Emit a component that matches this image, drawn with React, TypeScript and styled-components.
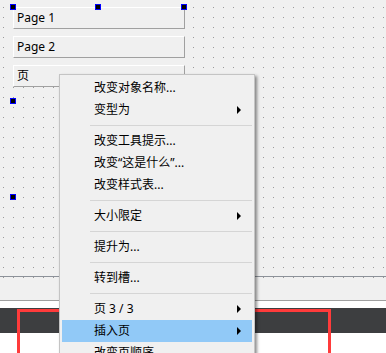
import styled, { createGlobalStyle } from "styled-components";

// ------ menu data ------
type Entry =
  | { kind: "item"; label: string; sub?: boolean; active?: boolean }
  | { kind: "sep" };

const menuEntries: Entry[] = [
  { kind: "item", label: "改变对象名称..." },
  { kind: "item", label: "变型为", sub: true },
  { kind: "sep" },
  { kind: "item", label: "改变工具提示..." },
  { kind: "item", label: "改变“这是什么”..." },
  { kind: "item", label: "改变样式表..." },
  { kind: "sep" },
  { kind: "item", label: "大小限定", sub: true },
  { kind: "sep" },
  { kind: "item", label: "提升为..." },
  { kind: "sep" },
  { kind: "item", label: "转到槽..." },
  { kind: "sep" },
  { kind: "item", label: "页 3 / 3", sub: true },
  { kind: "item", label: "插入页", sub: true, active: true },
  { kind: "item", label: "改变页顺序..." },
];

const pages = ["Page 1", "Page 2", "页"];

// handle positions relative to the tool box
const handles = [
  { x: -3, y: -3 },
  { x: 82, y: -3 },
  { x: 168, y: -3 },
  { x: -3, y: 91 },
  { x: -3, y: 187 },
];

function App() {
  return (
    <>
      <GlobalStyle />
      <Screen>
        {/* ------ designer form ------ */}
        <FormCanvas>
          <ToolBox>
            {pages.map((p) => (
              <ToolButton key={p}>{p}</ToolButton>
            ))}
            {handles.map((h, i) => (
              <Handle key={i} $x={h.x} $y={h.y} />
            ))}
          </ToolBox>
        </FormCanvas>
        <LowerStrip>
          <DotRow />
        </LowerStrip>
        <WhiteGap />
        <DarkBar />
        <WhiteRest />

        {/* ------ overlays ------ */}
        <Marker />
        <ContextMenu>
          {menuEntries.map((e, i) =>
            e.kind === "sep" ? (
              <Separator key={i} />
            ) : (
              <MenuItem key={i} $active={e.active}>
                <span>{e.label}</span>
                {e.sub ? <SubArrow /> : null}
              </MenuItem>
            )
          )}
        </ContextMenu>
      </Screen>
    </>
  );
}

export default App;

// ------ component styles -------
const GlobalStyle = createGlobalStyle`
  html, body {
    margin: 0;
    padding: 0;
  }
  body {
    background: #f0f0f0;
    font-family: "Noto Sans", "Noto Sans CJK SC", sans-serif;
    font-size: 12px;
    color: #000;
  }
`;

const dots = `
  background-color: #f0f0f0;
  background-image: linear-gradient(to right, transparent 1px, #f0f0f0 1px),
    linear-gradient(to bottom, #9a9a9a 1px, transparent 1px);
  background-size: 10px 10px;
`;

const Screen = styled.div`
  position: relative;
  width: 386px;
  height: 353px;
  overflow: hidden;
  display: flex;
  flex-direction: column;
`;

const FormCanvas = styled.div`
  ${dots}
  background-position: 3px 7px;
  height: 277px;
  flex-shrink: 0;
  box-sizing: border-box;
  padding: 7px 0 0 13px;
  border-bottom: 1px solid #8c9199;
`;

const LowerStrip = styled.div`
  height: 24px;
  flex-shrink: 0;
  box-sizing: border-box;
  background: #f0f0f0;
  border-bottom: 1px solid #a0a0a0;
`;

const DotRow = styled.div`
  ${dots}
  background-position: 3px 0;
  height: 1px;
`;

const WhiteGap = styled.div`
  height: 7px;
  flex-shrink: 0;
  background: #fff;
`;

const DarkBar = styled.div`
  height: 25px;
  flex-shrink: 0;
  background: #3d3e40;
`;

const WhiteRest = styled.div`
  flex: 1;
  background: #fff;
`;

const ToolBox = styled.div`
  position: relative;
  width: 172px;
  height: 191px;
  display: flex;
  flex-direction: column;
  gap: 7px;
`;

const ToolButton = styled.div`
  height: 22px;
  box-sizing: border-box;
  background: #f0f0f0;
  border-top: 1px solid #fff;
  border-left: 1px solid #fff;
  border-right: 1px solid #a0a0a0;
  border-bottom: 1px solid #a0a0a0;
  padding-left: 3px;
  line-height: 20px;
  font-size: 12px;
`;

const Handle = styled.div<{ $x: number; $y: number }>`
  position: absolute;
  left: ${(p) => p.$x}px;
  top: ${(p) => p.$y}px;
  width: 6px;
  height: 6px;
  box-sizing: border-box;
  border: 1px solid #0000ff;
  background: #000;
`;

const Marker = styled.div`
  position: absolute;
  left: 17px;
  top: 309px;
  width: 314px;
  height: 120px;
  box-sizing: border-box;
  border: 3px solid #ff3b3b;
`;

const ContextMenu = styled.div`
  position: absolute;
  left: 59px;
  top: 74px;
  width: 196px;
  box-sizing: border-box;
  padding: 2px;
  background: #f0f0f0;
  border: 1px solid #c4c4c4;
  box-shadow: 2px 2px 3px rgba(0, 0, 0, 0.45);
`;

const MenuItem = styled.div<{ $active?: boolean }>`
  height: 22px;
  display: flex;
  align-items: center;
  justify-content: space-between;
  padding: 0 11px 0 32px;
  background: ${(p) => (p.$active ? "#91c9f7" : "transparent")};
  font-family: "Noto Sans", "Noto Sans CJK SC", sans-serif;
  font-size: 12px;
  line-height: 22px;
  white-space: nowrap;
`;

const SubArrow = styled.span`
  width: 0;
  height: 0;
  border-left: 4px solid #000;
  border-top: 4px solid transparent;
  border-bottom: 4px solid transparent;
`;

const Separator = styled.div`
  height: 1px;
  margin: 4px 0 4px 28px;
  background: #d5d5d5;
`;
